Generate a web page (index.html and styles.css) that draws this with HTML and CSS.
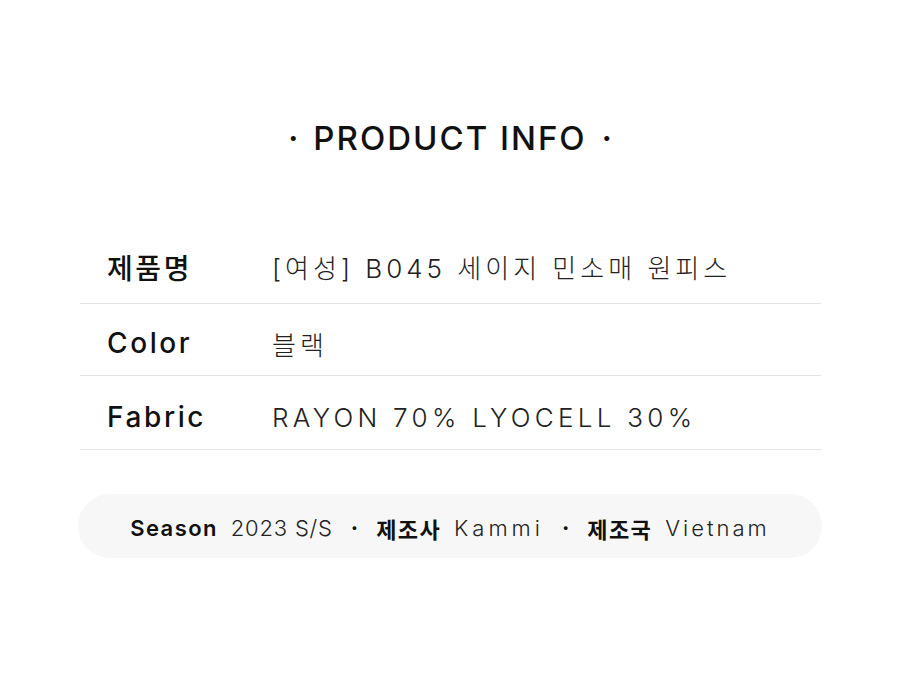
FILE: index.html
```html
<!DOCTYPE html>
<html lang="ko">
<head>
<meta charset="utf-8">
<link rel="stylesheet" href="styles.css">
</head>
<body>
<main class="page">
  <h1 class="title"><span class="dot">·</span>PRODUCT INFO<span class="dot">·</span></h1>
  <div class="info">
    <div class="row">
      <div class="label">제품명</div>
      <div class="value">[여성] B045 세이지 민소매 원피스</div>
    </div>
    <div class="row">
      <div class="label">Color</div>
      <div class="value">블랙</div>
    </div>
    <div class="row">
      <div class="label">Fabric</div>
      <div class="value value-latin">RAYON 70% LYOCELL 30%</div>
    </div>
  </div>
  <div class="pill">
    <span class="k">Season</span><span class="v v-num">2023 S/S</span>
    <span class="sep">·</span>
    <span class="k">제조사</span><span class="v v-kammi">Kammi</span>
    <span class="sep">·</span>
    <span class="k">제조국</span><span class="v">Vietnam</span>
  </div>
</main>
</body>
</html>
```

FILE: styles.css
```css
html, body {
  margin: 0;
  padding: 0;
  background: #ffffff;
}
body {
  font-family: "Inter", "Noto Sans CJK KR", sans-serif;
  color: #111;
}
.page {
  width: 900px;
  height: 684px;
  box-sizing: border-box;
  padding-top: 118px;
}
.title {
  margin: 0;
  text-align: center;
  font-size: 33px;
  font-weight: 500;
  line-height: 40px;
  letter-spacing: 2px;
  display: flex;
  justify-content: center;
  align-items: center;
  gap: 15px;
}
.title .dot {
  font-size: 30px;
  font-weight: 700;
  letter-spacing: 0;
}
.info {
  margin: 72px 79px 0 80px;
}
.row {
  display: flex;
  align-items: center;
  box-sizing: border-box;
  height: 72px;
  padding-top: 7px;
  border-bottom: 1px solid #e4e4e4;
}
.row:first-child {
  height: 74px;
  padding-top: 0;
}
.row:last-child {
  height: 74px;
  padding-top: 9px;
}
.label {
  width: 165px;
  padding-left: 27px;
  font-size: 28px;
  font-weight: 500;
  letter-spacing: 2.6px;
  color: #111;
}
.value {
  font-size: 26px;
  font-weight: 300;
  letter-spacing: 4px;
  color: #222;
}
.value-latin {
  letter-spacing: 4.3px;
}
.pill {
  margin: 44px 78px 0 78px;
  box-sizing: border-box;
  height: 64px;
  padding-top: 4px;
  border-radius: 32px;
  background: #f7f7f7;
  display: flex;
  align-items: center;
  justify-content: center;
  font-size: 22px;
}
.k {
  font-weight: 600;
  color: #111;
  letter-spacing: 1.4px;
  margin-right: 13px;
}
.v {
  font-weight: 300;
  color: #222;
  letter-spacing: 3px;
}
.v-num {
  letter-spacing: 0.8px;
}
.v-kammi {
  letter-spacing: 4px;
}
.sep {
  font-weight: 700;
  margin: 0 18px;
}
```
